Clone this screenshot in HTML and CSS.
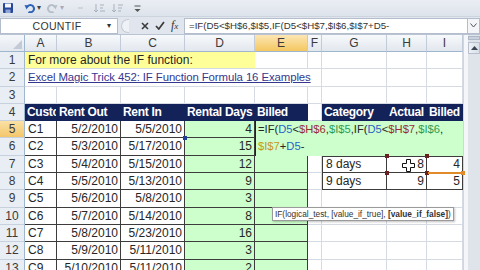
FILE: index.html
```
<!DOCTYPE html>
<html>
<head>
<meta charset="utf-8">
<link rel="stylesheet" href="styles.css">
</head>
<body>
<div class="app">
  <div class="qat">
    <svg class="ico" width="10" height="10" viewBox="0 0 10 10"><rect x="0" y="0" width="10" height="10" rx="1" fill="#27479a"/><rect x="2" y="0.5" width="6" height="4" fill="#f4f6fb"/><rect x="2.5" y="6.5" width="5" height="3.5" fill="#8fa6d4"/></svg>
    <svg class="ico gap1" width="11" height="10" viewBox="0 0 11 10"><path d="M3 4.5 A3.6 3.6 0 1 1 4.5 8.8" fill="none" stroke="#2c62b8" stroke-width="2"/><path d="M0.5 2 L4.8 2.4 L2.6 6.4 Z" fill="#2c62b8"/></svg>
    <span class="dd">▾</span>
    <svg class="ico gap2" width="11" height="10" viewBox="0 0 11 10"><path d="M8 4.5 A3.6 3.6 0 1 0 6.5 8.8" fill="none" stroke="#b8bec8" stroke-width="2"/><path d="M10.5 2 L6.2 2.4 L8.4 6.4 Z" fill="#b8bec8"/></svg>
    <span class="dd light">▾</span>
    <svg class="ico gap3" width="48" height="10" viewBox="0 0 48 10"><path d="M0 5 H5" stroke="#b9c0ca" stroke-width="1"/><path d="M18 1 V9 M16 7 L18 9 L20 7" stroke="#a9b0bb" fill="none"/><path d="M22 2 H26 M22 5 H25 M22 8 H27" stroke="#a9b0bb"/><path d="M36 1 V9 M34 7 L36 9 L38 7" stroke="#a9b0bb" fill="none"/><path d="M40 2 H45 M40 5 H44 M40 8 H43" stroke="#a9b0bb"/></svg>
    <svg class="ico gap4" width="7" height="9" viewBox="0 0 7 9"><path d="M0.5 2 H6.5" stroke="#555"/><path d="M0.5 5 L6.5 5 L3.5 8 Z" fill="#555"/></svg>
  </div>
  <div class="fbar">
    <div class="namebox"><span class="nm">COUNTIF</span><span class="nmdd">▾</span></div>
    <div class="knob"></div>
    <div class="fbtns">
      <svg width="8" height="8" viewBox="0 0 8 8"><path d="M1 1 L7 7 M7 1 L1 7" stroke="#3a3a3a" stroke-width="1.6"/></svg>
      <svg width="10" height="9" viewBox="0 0 10 9"><path d="M1 5 L3.8 8 L9 1" fill="none" stroke="#3a3a3a" stroke-width="1.7"/></svg>
      <span class="fx">f<i>x</i></span>
    </div>
    <div class="finput">=IF(D5&lt;$H$6,$I$5,IF(D5&lt;$H$7,$I$6,$I$7+D5-</div>
    <div class="fexp"><svg width="7" height="5" viewBox="0 0 7 5"><path d="M0.5 0.5 L3.5 4 L6.5 0.5" fill="none" stroke="#555"/></svg></div>
  </div>
  <div class="main">
    <div class="grid">
      <div class="corner"><svg width="9" height="9" viewBox="0 0 9 9"><path d="M9 0 V9 H0 Z" fill="#c3cad5"/></svg></div>
      <div class="ch">A</div><div class="ch">B</div><div class="ch">C</div><div class="ch">D</div><div class="ch on">E</div><div class="ch">F</div><div class="ch">G</div><div class="ch">H</div><div class="ch">I</div>

      <div class="rh">1</div>
      <div class="c y span4">For more about the IF function:</div>
      <div class="c"></div><div class="c"></div><div class="c"></div><div class="c"></div><div class="c"></div>

      <div class="rh">2</div>
      <div class="c span6"><span class="link">Excel Magic Trick 452: IF Function Formula 16 Examples</span></div>
      <div class="c"></div><div class="c"></div><div class="c"></div>

      <div class="rh">3</div>
      <div class="c"></div><div class="c"></div><div class="c"></div><div class="c"></div><div class="c"></div><div class="c"></div><div class="c"></div><div class="c"></div><div class="c"></div>

      <div class="rh">4</div>
      <div class="c hd">Custc</div><div class="c hd">Rent Out</div><div class="c hd">Rent In</div><div class="c hd">Rental Days</div><div class="c hd">Billed</div><div class="c"></div><div class="c hd">Category</div><div class="c hd">Actual</div><div class="c hd">Billed</div>

      <div class="rh on">5</div>
      <div class="c t">C1</div><div class="c t r">5/2/2010</div><div class="c t r">5/5/2010</div><div class="c t g r">4</div><div class="c t g"></div><div class="c"></div><div class="c"></div><div class="c"></div><div class="c"></div>

      <div class="rh">6</div>
      <div class="c t">C2</div><div class="c t r">5/3/2010</div><div class="c t r">5/17/2010</div><div class="c t g r">15</div><div class="c t g"></div><div class="c"></div><div class="c"></div><div class="c"></div><div class="c"></div>

      <div class="rh">7</div>
      <div class="c t">C3</div><div class="c t r">5/4/2010</div><div class="c t r">5/15/2010</div><div class="c t g r">12</div><div class="c t g"></div><div class="c"></div><div class="c bx bl bt">8 days</div><div class="c bx bt r">8</div><div class="c bx bt r">4</div>

      <div class="rh">8</div>
      <div class="c t">C4</div><div class="c t r">5/5/2010</div><div class="c t r">5/13/2010</div><div class="c t g r">9</div><div class="c t g"></div><div class="c"></div><div class="c bx bl">9 days</div><div class="c bx r">9</div><div class="c bx r">5</div>

      <div class="rh">9</div>
      <div class="c t">C5</div><div class="c t r">5/6/2010</div><div class="c t r">5/8/2010</div><div class="c t g r">3</div><div class="c t g"></div><div class="c"></div><div class="c"></div><div class="c"></div><div class="c"></div>

      <div class="rh">10</div>
      <div class="c t">C6</div><div class="c t r">5/7/2010</div><div class="c t r">5/14/2010</div><div class="c t g r">8</div><div class="c t g"></div><div class="c"></div><div class="c"></div><div class="c"></div><div class="c"></div>

      <div class="rh">11</div>
      <div class="c t">C7</div><div class="c t r">5/8/2010</div><div class="c t r">5/23/2010</div><div class="c t g r">16</div><div class="c t g"></div><div class="c"></div><div class="c"></div><div class="c"></div><div class="c"></div>

      <div class="rh">12</div>
      <div class="c t">C8</div><div class="c t r">5/9/2010</div><div class="c t r">5/11/2010</div><div class="c t g r">3</div><div class="c t g"></div><div class="c"></div><div class="c"></div><div class="c"></div><div class="c"></div>

      <div class="rh">13</div>
      <div class="c t">C9</div><div class="c t r">5/10/2010</div><div class="c t r">5/11/2010</div><div class="c t g r">2</div><div class="c t g"></div><div class="c"></div><div class="c"></div><div class="c"></div><div class="c"></div>
    </div>
    <div class="vscroll">
      <div class="split"></div>
      <div class="sbtn"><svg width="7" height="4" viewBox="0 0 7 4"><path d="M0 4 L3.5 0 L7 4 Z" fill="#3b4656"/></svg></div>
    </div>
  </div>

  <div class="edit">
    <div class="eline">=IF(<span class="rb">D5</span>&lt;<span class="rr">$H$6</span>,<span class="rgr">$I$5</span>,IF(<span class="rb">D5</span>&lt;<span class="rr">$H$7</span>,<span class="rgr">$I$6</span>,</div>
    <div class="eline"><span class="ro">$I$7</span>+<span class="rb">D5</span>-</div>
  </div>

  <div class="mk mk-d5"></div>
  <div class="mk mk-h1"></div><div class="mk mk-h2"></div><div class="mk mk-h3"></div><div class="mk mk-h4"></div>
  <div class="oline"></div><div class="mk mk-i1"></div>

  <svg class="cursor" width="13" height="13" viewBox="0 0 13 13"><path d="M4.5 0.5 H8.5 V4.5 H12.5 V8.5 H8.5 V12.5 H4.5 V8.5 H0.5 V4.5 H4.5 Z" fill="#fff" stroke="#111" stroke-width="1"/></svg>

  <div class="tip">IF(logical_test, [value_if_true], <b>[value_if_false]</b>)</div>
</div>
</body>
</html>
```
FILE: styles.css
```
* { box-sizing: border-box; }
body { margin: 0; font-family: "Liberation Sans", Arial, sans-serif; }
.app { width: 480px; height: 270px; overflow: hidden; position: relative; background: #fff; }

.qat { height: 16px; display: flex; align-items: center; padding-left: 3px; background: linear-gradient(#eaeef4, #dde3ec); }
.ico { display: block; }
.gap1 { margin-left: 11px; }
.gap2 { margin-left: 6px; }
.gap3 { margin-left: 14px; }
.gap4 { margin-left: 8px; }
.dd { font-size: 8px; color: #444; margin-left: 2px; line-height: 10px; }
.dd.light { color: #aab; }

.fbar { height: 19px; display: flex; align-items: center; background: #e1e6ee; border-bottom: 1px solid #b9c3d1; border-top: 1px solid #cdd4de; }
.namebox { width: 118px; height: 16px; background: #fff; border: 1px solid #b3bdcb; display: flex; align-items: center; }
.nm { flex: 1; text-align: center; font-size: 10.5px; color: #333; letter-spacing: 0.3px; padding-left: 6px; }
.nmdd { font-size: 8px; color: #333; width: 10px; }
.knob { width: 8px; height: 14px; margin-left: 3px; border: 1px solid #c4cad3; border-right: none; border-radius: 7px 0 0 7px; background: #eef1f5; }
.fbtns { width: 55px; display: flex; align-items: center; gap: 6px; padding-left: 12px; }
.fx { font-family: "Liberation Serif", serif; font-style: italic; font-size: 12px; color: #333; }
.fx i { font-size: 9px; }
.finput { width: 284px; height: 16px; background: #fff; border: 1px solid #b3bdcb; font-size: 9.7px; line-height: 14px; color: #333; padding-left: 4px; white-space: nowrap; overflow: hidden; }
.fexp { flex: 1; height: 16px; display: flex; align-items: center; justify-content: center; background: #f3f5f8; border: 1px solid #b3bdcb; border-left: none; }

.main { display: flex; }
.grid { width: 463px; display: grid; grid-template-columns: 25px 32px 64px 64px 70px 53px 14px 65px 40px 36px; grid-template-rows: 17px; grid-auto-rows: 17.3px; }
.corner { background: linear-gradient(#f5f7fa, #e3e8ef); border-right: 1px solid #9eb6ce; border-bottom: 1px solid #9eb6ce; display: flex; align-items: flex-end; justify-content: flex-end; padding: 0 2px 2px 0; }
.ch { background: linear-gradient(#f7f9fb, #e2e7ee); border-right: 1px solid #c2cbd8; border-bottom: 1px solid #9eb6ce; text-align: center; font-size: 12px; line-height: 16px; color: #3a3a3a; }
.ch.on { background: linear-gradient(#fce6b4, #f4c760); }
.rh { background: #e9eef5; border-right: 1px solid #9eb6ce; border-bottom: 1px solid #c7d1de; text-align: center; font-size: 12px; line-height: 16px; color: #3a3a3a; }
.rh.on { background: linear-gradient(#fbe1a6, #f3c66a); }

.c { border-right: 1px solid #d5dae3; border-bottom: 1px solid #d5dae3; font-size: 12px; line-height: 16px; padding: 0 2px 0 3px; white-space: nowrap; overflow: hidden; color: #262626; }
.r { text-align: right; }
.span4 { grid-column: span 4; }
.span6 { grid-column: span 6; }
.y { background: #ffff99; border-right-color: #ffff99; }
.link { color: #35378e; text-decoration: underline; font-size: 11.4px; letter-spacing: -0.1px; }
.hd { background: #14225a; color: #fff; font-weight: bold; letter-spacing: -0.3px; border-color: #14225a; padding-left: 2px; }
.t { border-color: #3c3c3c; }
.g { background: #ccffcc; }
.bx { border-color: #3c3c3c; }
.bl { border-left: 1px solid #3c3c3c; }
.bt { border-top: 1px solid #3c3c3c; line-height: 15px; }

.vscroll { flex: 1; height: 235px; background: linear-gradient(90deg, #f4f6f9 0 4px, #dfe4eb 4px); border-left: 1px solid #d0d6de; padding-left: 4px; }
.split { height: 4px; margin-top: 1px; background: #c9d1dc; border: 1px solid #aeb8c6; }
.sbtn { height: 12px; margin-top: 2px; display: flex; align-items: center; justify-content: center; background: linear-gradient(90deg, #eef1f5, #d9dfe7); border: 1px solid #b7c0cc; }

.edit { position: absolute; left: 255px; top: 121px; width: 208px; height: 35px; background: #ccffcc; border-left: 1px solid #222; padding-left: 2px; font-size: 11.2px; color: #262626; }
.eline { height: 17.3px; line-height: 17px; white-space: nowrap; }
.rb { color: #2a62c4; }
.rr { color: #9a2a3a; }
.rgr { color: #2f9a55; }
.ro { color: #c8961a; }

.mk { position: absolute; width: 4px; height: 4px; background: #6b1f1f; }
.mk-d5 { left: 183px; top: 136px; background: #1f3f9a; }
.mk-h1 { left: 385px; top: 154px; }
.mk-h2 { left: 425px; top: 154px; }
.mk-h3 { left: 385px; top: 171px; }
.mk-h4 { left: 425px; top: 171px; }
.oline { position: absolute; left: 428px; top: 172px; width: 34px; height: 2px; background: #e08a2a; }
.mk-i1 { left: 461px; top: 171px; background: #e08a2a; }

.cursor { position: absolute; left: 402px; top: 159px; }

.tip { position: absolute; left: 272px; top: 207px; height: 14px; padding: 0 2px; background: #fff; border: 1px solid #9a9a9a; box-shadow: 1px 1px 2px rgba(0,0,0,0.25); font-size: 8.3px; line-height: 12px; color: #333; white-space: nowrap; }
```
